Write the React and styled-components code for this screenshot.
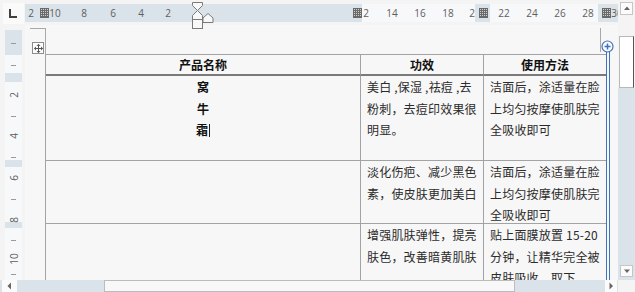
import React from "react";
import styled, { createGlobalStyle } from "styled-components";

const Global = createGlobalStyle`
  html, body { margin: 0; padding: 0; background: #f4f4f4; }
  body { font-family: "Noto Sans CJK SC", "Noto Sans", sans-serif; }
`;

const BLUEGRAY = "#dae2ea";
const LIGHT = "#f7f8fa";
const BORDER = "#a3a3a3";

const Frame = styled.div`
  width: 635px;
  height: 292px;
  overflow: hidden;
  display: grid;
  grid-template-columns: 25px 593px 17px;
  grid-template-rows: 25px 255px 12px;
  background: #f4f4f4;
`;

/* ---------- corner ---------- */
const Corner = styled.div`
  grid-row: 1;
  grid-column: 1;
  padding: 3px 1px 1px 3px;
`;
const CornerBox = styled.div`
  width: 21px;
  height: 21px;
  background: #fafafa;
  display: flex;
  align-items: center;
  justify-content: center;
`;

/* ---------- top ruler ---------- */
const TopRuler = styled.div`
  grid-row: 1;
  grid-column: 2;
  position: relative;
  padding-top: 4px;
  z-index: 2;
`;
const Band = styled.div`
  position: relative;
  height: 18px;
  display: flex;
  overflow: hidden;
`;
const Seg = styled.div`
  flex: 0 0 ${(p) => p.$w}px;
  background: ${(p) => (p.$dark ? BLUEGRAY : LIGHT)};
`;
const HLabel = styled.span`
  position: absolute;
  top: 0;
  line-height: 18px;
  font-family: "Open Sans", "Liberation Sans", sans-serif;
  font-size: 10px;
  color: #5e5e5e;
  transform: translateX(-50%);
  white-space: nowrap;
`;
const GridMark = styled.svg`
  position: absolute;
  top: 4px;
`;
const IndentMarks = styled.svg`
  position: absolute;
  left: 165px;
  top: 0;
`;

/* ---------- left ruler ---------- */
const LeftRuler = styled.div`
  grid-row: 2;
  grid-column: 1;
  padding: 5px 3px 0 5px;
`;
const VBand = styled.div`
  position: relative;
  height: 250px;
  display: flex;
  flex-direction: column;
`;
const VSeg = styled.div`
  flex: ${(p) => (p.$h ? `0 0 ${p.$h}px` : "1 1 auto")};
  background: ${(p) => (p.$dark ? BLUEGRAY : LIGHT)};
`;
const VLabel = styled.span`
  position: absolute;
  left: 50%;
  font-family: "Open Sans", "Liberation Sans", sans-serif;
  font-size: 10px;
  line-height: 10px;
  color: #5e5e5e;
  transform: translate(-50%, -50%) rotate(-90deg);
  white-space: nowrap;
`;
const Tick = styled.i`
  position: absolute;
  left: 6px;
  width: 5px;
  height: 1px;
  background: #9a9a9a;
`;

/* ---------- document ---------- */
const Doc = styled.div`
  grid-row: 2;
  grid-column: 2;
  position: relative;
  overflow: hidden;
  background: #f7f7f7;
  padding: 29px 0 0 20px;
`;
const CropH = styled.div`
  position: absolute;
  height: 1px;
  background: #a8a8a8;
`;
const CropV = styled.div`
  position: absolute;
  width: 1px;
  background: #a8a8a8;
`;
const MoveHandle = styled.div`
  position: absolute;
  left: 7px;
  top: 17px;
  width: 12px;
  height: 12px;
  box-sizing: border-box;
  border: 1px solid #8c8c8c;
  background: #fdfdfd;
  display: flex;
  align-items: center;
  justify-content: center;
`;
const ColLine = styled.div`
  position: absolute;
  left: 581px;
  top: 27px;
  bottom: 0;
  width: 2px;
  border-left: 1px solid #3f72bd;
  border-right: 1px solid #3f72bd;
`;
const ColKnob = styled.svg`
  position: absolute;
  left: 576px;
  top: 15px;
`;

const Table = styled.div`
  display: grid;
  grid-template-columns: 315px 123px 123px;
  grid-template-rows: 21px 85px 63px 100px;
  border-left: 1px solid ${BORDER};
  border-top: 1px solid ${BORDER};
  width: 561px;
  color: #2b2b2b;
  font-size: 12px;
`;
const Cell = styled.div`
  box-sizing: border-box;
  overflow: hidden;
  border-right: 1px solid ${BORDER};
  border-bottom: ${(p) => (p.$head ? "2px solid #7a7a7a" : `1px solid ${BORDER}`)};
  padding: 0 ${(p) => (p.$center ? 0 : 5)}px 0 ${(p) => (p.$center ? 0 : 6)}px;
  text-align: ${(p) => (p.$center ? "center" : "left")};
  font-weight: ${(p) => (p.$bold ? 700 : 400)};
  color: ${(p) => (p.$bold ? "#111" : "#2b2b2b")};
  line-height: ${(p) => (p.$head ? "19px" : "21.5px")};
`;
const Line = styled.div`
  white-space: nowrap;
  letter-spacing: 0.2px;
`;
const Caret = styled.span`
  display: inline-block;
  width: 1px;
  height: 13px;
  margin-left: 1px;
  background: #222;
  vertical-align: -2px;
`;

/* ---------- scrollbars ---------- */
const VScroll = styled.div`
  grid-row: 1 / 3;
  grid-column: 3;
  display: flex;
  flex-direction: column;
  background: #f4f4f4;
`;
const ArrowBtn = styled.div`
  box-sizing: border-box;
  flex: 0 0 ${(p) => p.$h || 13}px;
  width: ${(p) => p.$w || 13}px;
  margin: ${(p) => p.$m || "0"};
  background: #fbfbfb;
  border: 1px solid ${(p) => (p.$plain ? "transparent" : "#c6c6c6")};
  display: flex;
  align-items: center;
  justify-content: center;
`;
const VGap = styled.div`
  flex: 0 0 21px;
`;
const VThumb = styled.div`
  flex: 0 0 52px;
  box-sizing: border-box;
  margin: 0 1px 0 1px;
  background: #ffffff;
  border: 1px solid #b8b8b8;
  border-right: 1px solid #555;
`;
const VTrack = styled.div`
  flex: 1 1 auto;
  background: ${BLUEGRAY};
  display: flex;
  flex-direction: column;
  justify-content: flex-end;
  align-items: center;
  padding-bottom: 3px;
`;

const HScroll = styled.div`
  grid-row: 3;
  grid-column: 1 / 3;
  display: flex;
  background: ${BLUEGRAY};
`;
const HTrack = styled.div`
  flex: ${(p) => (p.$w ? `0 0 ${p.$w}px` : "1 1 auto")};
`;
const HThumb = styled.div`
  flex: 0 0 411px;
  box-sizing: border-box;
  background: #f8f8f8;
  border: 1px solid #bcbcbc;
`;
const BottomCorner = styled.div`
  grid-row: 3;
  grid-column: 3;
  background: #f4f4f4;
`;

/* ---------- data ---------- */
const topLabels = [
  { x: 6, t: "2" },
  { x: 30, t: "10" },
  { x: 59, t: "8" },
  { x: 88, t: "6" },
  { x: 116, t: "4" },
  { x: 143, t: "2" },
  { x: 341, t: "2" },
  { x: 367, t: "14" },
  { x: 395, t: "16" },
  { x: 423, t: "18" },
  { x: 447, t: "2" },
  { x: 479, t: "22" },
  { x: 507, t: "24" },
  { x: 535, t: "26" },
  { x: 563, t: "28" },
  { x: 592, t: "30" },
];
const gridMarks = [15, 328, 454, 577];
const leftLabels = [
  { y: 65, t: "2" },
  { y: 106, t: "4" },
  { y: 148, t: "6" },
  { y: 190, t: "8" },
  { y: 229, t: "10" },
];
const ticks = [13, 35, 86, 127, 169, 210, 244];

const usage1 = ["洁面后，涂适量在脸", "上均匀按摩使肌肤完", "全吸收即可"];
const rows = [
  {
    name: ["窝", "牛", "霜"],
    effect: ["美白 ,保湿 ,祛痘 ,去", "粉刺，去痘印效果很", "明显。"],
    usage: usage1,
  },
  { name: [], effect: ["淡化伤疤、减少黑色", "素，使皮肤更加美白"], usage: usage1 },
  {
    name: [],
    effect: ["增强肌肤弹性，提亮", "肤色，改善暗黄肌肤"],
    usage: ["贴上面膜放置 15-20", "分钟，让精华完全被", "皮肤吸收，取下"],
  },
];

const GridIcon = ({ left }) => (
  <GridMark width="9" height="10" viewBox="0 0 9 10" style={{ left }}>
    <rect x="0.5" y="0.5" width="8" height="9" fill="#d0d0d0" stroke="#6a6a6a" />
    {[2.5, 4.5, 6.5].map((x) => (
      <line key={"v" + x} x1={x} y1="0.5" x2={x} y2="9.5" stroke="#6a6a6a" />
    ))}
    {[2.5, 4.5, 6.5, 8.5].map((y) => (
      <line key={"h" + y} x1="0.5" y1={y} x2="8.5" y2={y} stroke="#6a6a6a" />
    ))}
  </GridMark>
);

const Tri = ({ dir }) => {
  const pts = {
    up: "1,5 4,1.5 7,5",
    down: "1,1.5 4,5 7,1.5",
    left: "5,0.5 1.5,4 5,7.5",
    right: "1.5,0.5 5,4 1.5,7.5",
  }[dir];
  const horiz = dir === "left" || dir === "right";
  return (
    <svg width={horiz ? 7 : 8} height={horiz ? 8 : 7} viewBox={horiz ? "0 0 7 8" : "0 0 8 7"}>
      <polygon points={pts} fill="#666" />
    </svg>
  );
};

export default function App() {
  return (
    <>
      <Global />
      <Frame>
        <Corner>
          <CornerBox>
            <svg width="9" height="9" viewBox="0 0 9 9">
              <path d="M1 0 V8 H8" fill="none" stroke="#404040" strokeWidth="2" />
            </svg>
          </CornerBox>
        </Corner>

        <TopRuler>
          <Band>
            <Seg $w={337} $dark />
            <Seg $w={113} />
            <Seg $w={15} $dark />
            <Seg $w={108} />
            <Seg $w={20} $dark />
            {topLabels.map((l, i) => (
              <HLabel key={i} style={{ left: l.x }}>
                {l.t}
              </HLabel>
            ))}
            {gridMarks.map((x) => (
              <GridIcon key={x} left={x} />
            ))}
          </Band>
          <IndentMarks width="26" height="31" viewBox="0 0 26 31">
            <g fill="#f8f8f8" stroke="#7a7a7a" strokeWidth="1">
              <polygon points="2.5,2.5 12.5,2.5 12.5,5.5 7.5,10.5 2.5,5.5" />
              <polygon points="7.5,10.5 12.5,15.5 12.5,19.5 2.5,19.5 2.5,15.5" />
              <rect x="2.5" y="19.5" width="10" height="9" />
              <polygon points="18,13.5 23,18 23,22.5 13,22.5 13,18" />
            </g>
          </IndentMarks>
        </TopRuler>

        <LeftRuler>
          <VBand>
            <VSeg $h={25} $dark />
            <VSeg $h={18} />
            <VSeg $h={9} $dark />
            <VSeg $h={78} />
            <VSeg $h={7} $dark />
            <VSeg $h={55} />
            <VSeg $h={6} $dark />
            <VSeg />
            {ticks.map((y) => (
              <Tick key={y} style={{ top: y }} />
            ))}
            {leftLabels.map((l) => (
              <VLabel key={l.t} style={{ top: l.y }}>
                {l.t}
              </VLabel>
            ))}
          </VBand>
        </LeftRuler>

        <Doc>
          <CropH style={{ left: 5, top: 3, width: 15 }} />
          <CropV style={{ left: 20, top: 3, height: 26 }} />
          <CropV style={{ left: 575, top: 3, height: 24 }} />
          <MoveHandle>
            <svg width="9" height="9" viewBox="0 0 9 9">
              <g stroke="#555" strokeWidth="1" fill="none">
                <line x1="4.5" y1="0.5" x2="4.5" y2="8.5" />
                <line x1="0.5" y1="4.5" x2="8.5" y2="4.5" />
              </g>
              <g fill="#555">
                <polygon points="4.5,0 2.5,2 6.5,2" />
                <polygon points="4.5,9 2.5,7 6.5,7" />
                <polygon points="0,4.5 2,2.5 2,6.5" />
                <polygon points="9,4.5 7,2.5 7,6.5" />
              </g>
            </svg>
          </MoveHandle>

          <Table>
            <Cell $head $center $bold>产品名称</Cell>
            <Cell $head $center $bold>功效</Cell>
            <Cell $head $center $bold>使用方法</Cell>
            {rows.map((r, i) => (
              <React.Fragment key={i}>
                <Cell $center $bold>
                  {r.name.map((n, j) => (
                    <Line key={j}>
                      {n}
                      {j === r.name.length - 1 && <Caret />}
                    </Line>
                  ))}
                </Cell>
                <Cell>
                  {r.effect.map((t, j) => (
                    <Line key={j}>{t}</Line>
                  ))}
                </Cell>
                <Cell>
                  {r.usage.map((t, j) => (
                    <Line key={j}>{t}</Line>
                  ))}
                </Cell>
              </React.Fragment>
            ))}
          </Table>

          <ColLine />
          <ColKnob width="13" height="13" viewBox="0 0 13 13">
            <circle cx="6.5" cy="6.5" r="5.5" fill="#fbfbfb" stroke="#3f72bd" strokeWidth="1.2" />
            <path d="M6.5 3.5 V9.5 M3.5 6.5 H9.5" stroke="#3f72bd" strokeWidth="1.5" />
          </ColKnob>
        </Doc>

        <VScroll>
          <ArrowBtn $m="2px 0 0 2px">
            <Tri dir="up" />
          </ArrowBtn>
          <VGap />
          <VThumb />
          <VTrack>
            <ArrowBtn $h={12} $w={13}>
              <Tri dir="down" />
            </ArrowBtn>
          </VTrack>
        </VScroll>

        <HScroll>
          <HTrack $w={2} />
          <ArrowBtn $h={15} $w={15} $plain>
            <Tri dir="left" />
          </ArrowBtn>
          <HTrack $w={87} />
          <HThumb />
          <HTrack />
          <ArrowBtn $h={12} $w={12} $plain>
            <Tri dir="right" />
          </ArrowBtn>
          <HTrack $w={1} />
        </HScroll>
        <BottomCorner />
      </Frame>
    </>
  );
}
